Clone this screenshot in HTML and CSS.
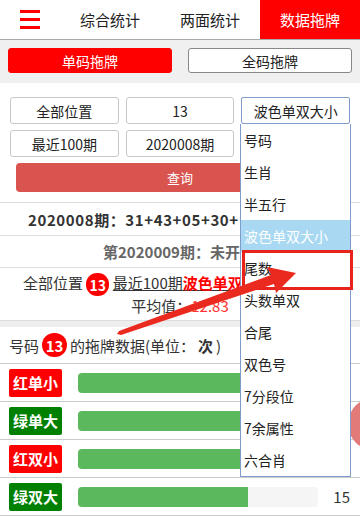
FILE: index.html
```html
<!DOCTYPE html>
<html lang="zh">
<head>
  <meta charset="UTF-8"/>
  <meta name="viewport" content="width=device-width, initial-scale=1.0"/>
  <title>数据拖牌</title>
  <link rel="stylesheet" href="styles.css">
</head>
<body>
  <header class="topbar">
    <div class="menu-icon"><span></span><span></span><span></span></div>
    <nav class="nav">
      <a class="nav-item">综合统计</a>
      <a class="nav-item">两面统计</a>
      <a class="nav-item active">数据拖牌</a>
    </nav>
  </header>

  <div class="sub-tabs">
    <button class="sub-tab active">单码拖牌</button>
    <button class="sub-tab">全码拖牌</button>
  </div>

  <div class="filters">
    <div class="field">全部位置</div>
    <div class="field">13</div>
    <div class="field focused">波色单双大小</div>
    <div class="field">最近100期</div>
    <div class="field">2020008期</div>
    <div class="field empty"></div>
  </div>
  <div class="query-wrap">
    <button class="query-btn">查询</button>
  </div>

  <div class="info-row bold"><span class="info-text draw">2020008期：31+43+05+30+</span></div>
  <div class="info-row grey"><span class="info-text next">第2020009期：未开</span></div>
  <div class="summary">
    <p class="summary-line">全部位置 <span class="ball">13</span> <u>最近100期<b class="red">波色单双</b></u></p>
    <p class="summary-avg">平均值：<span class="avg">12.83</span></p>
  </div>

  <div class="gap-band"></div>

  <section class="stats">
    <div class="stats-title">号码 <span class="ball">13</span> 的拖牌数据(单位：<b>次</b>)</div>
    <div class="stat-row">
      <span class="tag red-tag">红单小</span>
      <div class="bar"><div class="fill" style="width: 100%"></div></div>
    </div>
    <div class="stat-row">
      <span class="tag green-tag">绿单大</span>
      <div class="bar"><div class="fill" style="width: 100%"></div></div>
    </div>
    <div class="stat-row">
      <span class="tag red-tag">红双小</span>
      <div class="bar"><div class="fill" style="width: 100%"></div></div>
    </div>
    <div class="stat-row">
      <span class="tag green-tag">绿双大</span>
      <div class="bar"><div class="fill" style="width: 71%"></div></div>
      <span class="num">15</span>
    </div>
  </section>

  <div class="watermark"><div class="stamp"></div></div>

  <!-- open select list -->
  <ul class="dropdown">
    <li>号码</li>
    <li>生肖</li>
    <li>半五行</li>
    <li class="selected">波色单双大小</li>
    <li>尾数</li>
    <li>头数单双</li>
    <li>合尾</li>
    <li>双色号</li>
    <li>7分段位</li>
    <li>7余属性</li>
    <li>六合肖</li>
  </ul>

  <!-- annotation -->
  <div class="mark-box"></div>
  <svg class="arrow" width="360" height="518" viewBox="0 0 360 518">
    <polygon points="117,334 119,331 271,275 267,267 296,273 276,293 274,284 121,335" fill="#ea2a1f"/>
  </svg>
</body>
</html>
```

FILE: styles.css
```css
* {
  box-sizing: border-box;
}

body {
  margin: 0;
  font-family: "Noto Sans CJK SC", "Noto Sans", sans-serif;
  font-size: 14px;
  color: #333;
  background: #fff;
  position: relative;
  height: 518px;
  overflow: hidden;
}

/* header */
.topbar {
  display: flex;
  height: 40px;
  border-bottom: 1px solid #a9a9a9;
  background: #fff;
}

.menu-icon {
  width: 60px;
  display: flex;
  flex-direction: column;
  justify-content: center;
  gap: 5px;
  padding-left: 20px;
}

.menu-icon span {
  display: block;
  width: 20px;
  height: 3px;
  background: #f00;
}

.nav {
  display: flex;
  flex: 1;
}

.nav-item {
  width: 100px;
  display: flex;
  align-items: center;
  justify-content: center;
  font-size: 15px;
  color: #222;
}

.nav-item.active {
  background: #f00;
  color: #fff;
}

/* sub tabs */
.sub-tabs {
  display: flex;
  gap: 16px;
  padding: 8px 8px 10px;
  background: #f0f0f0;
}

.sub-tab {
  flex: 1;
  height: 25px;
  border: 1px solid #888;
  border-radius: 3px;
  background: #fff;
  font-family: inherit;
  font-size: 14px;
  color: #222;
  padding: 0;
}

.sub-tab.active {
  background: #f00;
  border-color: #f00;
  color: #fff;
}

/* filters */
.filters {
  display: grid;
  grid-template-columns: repeat(3, 1fr);
  gap: 6px 7px;
  padding: 14px 10px 0;
}

.field {
  height: 27px;
  border: 1px solid #c8c8c8;
  border-radius: 3px;
  display: flex;
  align-items: center;
  justify-content: center;
  color: #222;
}

.field.focused {
  border-color: #7f9dcc;
  border-radius: 2px;
}

.query-wrap {
  padding: 6px 16px 10px;
}

.query-btn {
  width: 100%;
  height: 29px;
  border: none;
  border-radius: 4px;
  background: #d9534f;
  color: #fff;
  font-family: inherit;
  font-size: 13px;
}

/* info */
.info-row {
  height: 33px;
  border-top: 1px solid #ddd;
  display: flex;
  align-items: center;
  font-size: 15px;
  font-weight: bold;
}

.info-text {
  white-space: nowrap;
}

.info-text.draw {
  margin-left: 28px;
  color: #333;
  letter-spacing: 0.6px;
}

.info-text.next {
  margin-left: 103px;
  color: #666;
}

.info-row.grey {
  height: 32px;
}

.summary {
  border-top: 1px solid #ddd;
  height: 53px;
  padding-top: 5px;
  font-size: 15px;
}

.summary p {
  margin: 0;
  line-height: 20px;
  white-space: nowrap;
}

.summary-line {
  padding-left: 23px;
}

.summary-avg {
  text-align: center;
}

.summary-line u {
  text-decoration-thickness: 1px;
}

.red {
  color: #f00;
}

.avg {
  color: #f33;
}

.ball {
  display: inline-flex;
  align-items: center;
  justify-content: center;
  width: 23px;
  height: 23px;
  border-radius: 11px;
  background: #f00;
  color: #fff;
  font-weight: bold;
  font-size: 14px;
  vertical-align: middle;
}

.gap-band {
  height: 7px;
  background: #eee;
  border-top: 1px solid #ddd;
}

/* stats */
.stats-title {
  height: 37px;
  display: flex;
  align-items: center;
  gap: 3px;
  padding-left: 9px;
  border-bottom: 1px solid #ccc;
  color: #333;
  font-size: 15px;
}

.stats-title .ball {
  width: 25px;
  height: 24px;
  border-radius: 12px;
  font-size: 15px;
}

.stat-row {
  height: 38px;
  display: flex;
  align-items: center;
  padding: 0 10px 0 9px;
  border-bottom: 1px solid #ccc;
}

.tag {
  width: 53px;
  height: 28px;
  border-radius: 2px;
  display: flex;
  align-items: center;
  justify-content: center;
  color: #fff;
  font-weight: bold;
  font-size: 15px;
}

.red-tag {
  background: #f00;
}

.green-tag {
  background: #008000;
}

.bar {
  width: 240px;
  height: 20px;
  margin-left: 16px;
  background: #f5f5f5;
  border-radius: 4px;
  overflow: hidden;
}

.fill {
  height: 100%;
  background: #5cb85c;
}

.num {
  flex: 1;
  text-align: right;
  color: #333;
  font-size: 15px;
}

/* watermark at the right edge, mostly off screen */
.watermark {
  position: absolute;
  top: 398px;
  left: 348px;
  width: 12px;
  height: 52px;
  overflow: hidden;
}

.stamp {
  width: 52px;
  height: 52px;
  border-radius: 50%;
  background: #e27a7a;
}

/* dropdown list */
.dropdown {
  position: absolute;
  top: 124px;
  left: 240px;
  width: 111px;
  margin: 0;
  padding: 0;
  list-style: none;
  background: #fff;
  border: 1px solid #7f9dcc;
  border-top: none;
}

.dropdown li {
  height: 32px;
  line-height: 32px;
  padding-left: 3px;
  color: #222;
  font-size: 14px;
}

.dropdown li.selected {
  background: #a9d9f2;
  color: #fff;
}

.mark-box {
  position: absolute;
  top: 250px;
  left: 242px;
  width: 111px;
  height: 40px;
  border: 3px solid #e8231b;
}

.arrow {
  position: absolute;
  top: 0;
  left: 0;
}
```
